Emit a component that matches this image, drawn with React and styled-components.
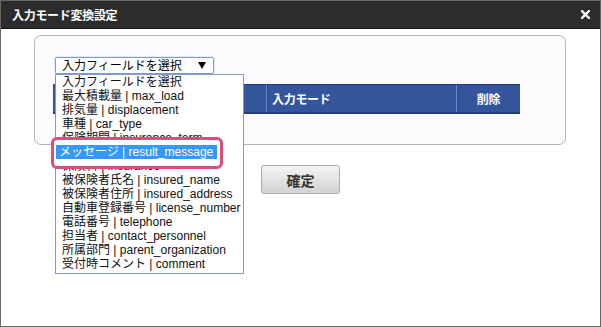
import React from "react";
import styled, { createGlobalStyle } from "styled-components";

const Global = createGlobalStyle`
  html, body { margin: 0; padding: 0; background: #fff; }
  body { font-family: "Liberation Sans", "Noto Sans CJK JP", sans-serif; }
`;

const Window = styled.div`
  width: 601px;
  height: 327px;
  box-sizing: border-box;
  border: 1px solid #676767;
  background: #fff;
  display: flex;
  flex-direction: column;
`;

const TitleBar = styled.div`
  height: 27px;
  border-bottom: 1px solid #111;
  background: #2c2c2c;
  display: flex;
  align-items: center;
  justify-content: space-between;
  padding: 0 10px 0 11px;
  color: #fff;
`;

const Title = styled.span`
  font-family: "Noto Sans CJK JP", sans-serif;
  font-weight: 700;
  font-size: 12px;
  letter-spacing: -0.3px;
`;

const CloseIcon = styled.svg`
  width: 9px;
  height: 9px;
  display: block;
`;

const Body = styled.div`
  display: flex;
  flex-direction: column;
  align-items: center;
  padding-top: 6px;
`;

const Panel = styled.div`
  align-self: flex-start;
  margin-left: 33px;
  width: 532px;
  height: 110px;
  box-sizing: border-box;
  border: 1px solid #b4b4b4;
  border-radius: 7px;
  background: #fbfbfe;
  padding: 21px 0 0 18px;
  display: flex;
  flex-direction: column;
  align-items: flex-start;
  gap: 10px;
`;

const SelectWrap = styled.div`
  position: relative;
  margin-left: 2px;
  z-index: 2;
`;

const SelectBox = styled.div`
  width: 159px;
  height: 17px;
  box-sizing: border-box;
  border: 1px solid #7c9ad8;
  border-radius: 2px;
  box-shadow: 0 0 2px #a9bff0;
  background: #fff;
  display: flex;
  align-items: center;
  justify-content: space-between;
  padding: 0 6px 0 6px;
  font-family: "Liberation Sans", "Noto Sans CJK JP", sans-serif;
  font-size: 12px;
  line-height: 14px;
  color: #000;
`;

const Arrow = styled.svg`
  width: 8px;
  height: 7px;
  display: block;
  margin-right: 1px;
`;

const List = styled.ul`
  position: absolute;
  left: 0;
  top: 17px;
  width: 189px;
  box-sizing: border-box;
  margin: 0;
  padding: 0 0 2px 0;
  list-style: none;
  border: 1px solid #7f9db9;
  background: #fff;
`;

const Item = styled.li`
  height: 14px;
  line-height: 14px;
  padding-left: 6px;
  font-size: 12px;
  white-space: nowrap;
  overflow: hidden;
  color: #111;
  visibility: ${(p) => (p.$covered ? "hidden" : "visible")};
`;

const Highlight = styled.div`
  position: absolute;
  left: -4px;
  top: 80px;
  width: 172px;
  height: 32px;
  box-sizing: border-box;
  border: 3px solid #e5487d;
  border-radius: 6px;
  background: #fff;
  padding: 5px 3px 0 2px;
`;

const SelectedRow = styled.div`
  height: 14px;
  line-height: 14px;
  background: #3399ff;
  color: #fff;
  font-size: 12px;
  padding-left: 3px;
  white-space: nowrap;
`;

const Table = styled.div`
  width: 467px;
  height: 30px;
  box-sizing: border-box;
  border-top: 1px solid #233f78;
  border-bottom: 2px solid #233f78;
  background: #34559b;
  display: grid;
  grid-template-columns: 213px 190px 1fr;
  z-index: 1;
`;

const HeadCell = styled.div`
  display: flex;
  align-items: center;
  justify-content: ${(p) => (p.$center ? "center" : "flex-start")};
  padding-left: ${(p) => (p.$center ? "0" : "5px")};
  border-left: ${(p) => (p.$divider ? "1px solid #6f8fc7" : "none")};
  box-shadow: ${(p) => (p.$divider ? "inset 1px 0 0 #2a4680" : "none")};
  color: #fff;
  font-family: "Noto Sans CJK JP", sans-serif;
  font-weight: 700;
  font-size: 12px;
  letter-spacing: -0.3px;
`;

const Button = styled.button`
  margin-top: 20px;
  width: 79px;
  height: 29px;
  box-sizing: border-box;
  border: 1px solid #ababab;
  border-radius: 3px;
  background: linear-gradient(#f4f4f4, #d2d2d2);
  font-family: "Noto Sans CJK JP", sans-serif;
  font-weight: 700;
  font-size: 14px;
  color: #333;
  padding: 0;
  cursor: pointer;
`;

const items = [
  ["入力フィールドを選択", ""],
  ["最大積載量", "max_load"],
  ["排気量", "displacement"],
  ["車種", "car_type"],
  ["保険期間", "insurance_term"],
  ["メッセージ", "result_message"],
  ["保険料", "insurance"],
  ["被保険者氏名", "insured_name"],
  ["被保険者住所", "insured_address"],
  ["自動車登録番号", "license_number"],
  ["電話番号", "telephone"],
  ["担当者", "contact_personnel"],
  ["所属部門", "parent_organization"],
  ["受付時コメント", "comment"],
];

export default function App() {
  return (
    <>
      <Global />
      <Window>
        <TitleBar>
          <Title>入力モード変換設定</Title>
          <CloseIcon viewBox="0 0 9 9">
            <path d="M1 1 L8 8 M8 1 L1 8" stroke="#fff" strokeWidth="2.4" strokeLinecap="square" />
          </CloseIcon>
        </TitleBar>
        <Body>
          <Panel>
            <SelectWrap>
              <SelectBox>
                <span>入力フィールドを選択</span>
                <Arrow viewBox="0 0 8 7">
                  <path d="M0 0 H8 L4 7 Z" fill="#000" />
                </Arrow>
              </SelectBox>
              <List>
                {items.map(([ja, en]) => (
                  <Item key={ja} $covered={en === "result_message"}>
                    {en ? `${ja} | ${en}` : ja}
                  </Item>
                ))}
              </List>
              <Highlight>
                <SelectedRow>メッセージ | result_message</SelectedRow>
              </Highlight>
            </SelectWrap>
            <Table>
              <HeadCell />
              <HeadCell $divider>入力モード</HeadCell>
              <HeadCell $divider $center>削除</HeadCell>
            </Table>
          </Panel>
          <Button>確定</Button>
        </Body>
      </Window>
    </>
  );
}
